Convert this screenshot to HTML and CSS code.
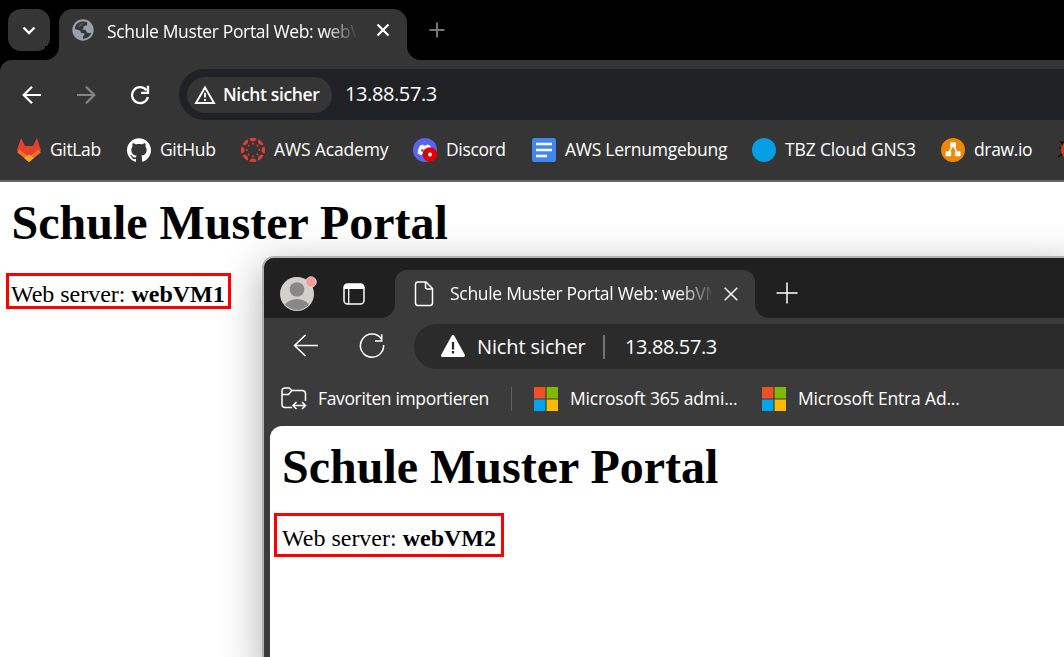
FILE: index.html
```html
<!DOCTYPE html>
<html lang="de">
<head>
<meta charset="utf-8">
<title>Schule Muster Portal</title>
<link rel="stylesheet" href="styles.css">
</head>
<body>
<main class="desktop">
  <section class="chrome">
    <header class="c-tabs">
      <div class="c-search"><svg width="42" height="42" viewBox="0 0 42 42"><path d="M15.500 18.500l5.500 5.500 5.500-5.500" fill="none" stroke="#fff" stroke-width="2.400"/></svg></div>
      <div class="c-tab">
        <svg class="globe" width="22" height="22" viewBox="0 0 22 22"><circle cx="11" cy="11" r="10.700" fill="#9aa0a6"/><path d="M3 10C3 6 6 3 10.500 2.600c2 0 3.500.4 4.700 1L15 6.300l-3.500 1v2.200L10 10.700h3.500l1.500 3 4.300.5c-1.500 3.300-4.500 5.500-8.300 5.500v-2.500l1.500-1.400v-1.600h-3L8 11.500z" fill="#353535"/><path d="M5.500 7.500L9 4.300l3-.3-2.500 2.800-2 1.500z" fill="#9aa0a6" opacity=".35"/></svg>
        <span class="c-title">Schule Muster Portal Web: webVM1</span>
        <svg class="c-close" width="14" height="14" viewBox="0 0 14 14"><path d="M1.500 1.500l11 11M12.500 1.500l-11 11" stroke="#fff" stroke-width="2.200"/></svg>
      </div>
      <svg class="c-plus" width="16" height="16" viewBox="0 0 16 16"><path d="M8 .5v15M.5 8h15" stroke="#777" stroke-width="2"/></svg>
    </header>
    <div class="c-tools">
      <svg width="20" height="20" viewBox="0 0 20 20"><path d="M19 10H2M10 1.700L1.700 10l8.300 8.300" fill="none" stroke="#fff" stroke-width="2.200"/></svg>
      <svg width="20" height="20" viewBox="0 0 20 20"><path d="M1 10h17M10 1.700l8.300 8.300-8.300 8.300" fill="none" stroke="#858585" stroke-width="2.200"/></svg>
      <svg width="20" height="20" viewBox="0 0 20 20"><path d="M16.500 5.300A8 8 0 1 0 17.900 12M18 .8v7h-7" fill="none" stroke="#fff" stroke-width="2.300"/></svg>
      <div class="c-address">
        <div class="c-chip">
          <svg width="22" height="20" viewBox="0 0 22 20"><path d="M11 2.500L20 18H2z" fill="none" stroke="#fff" stroke-width="1.900"/><path d="M11 7.800v4.700M11 14v2" stroke="#fff" stroke-width="1.900"/></svg>
          <span class="c-insecure">Nicht sicher</span>
        </div>
        <span class="c-url">13.88.57.3</span>
      </div>
    </div>
    <nav class="c-marks">
      <a><svg width="24" height="24" viewBox="0 0 24 24"><path d="M4 0l4 8h8l4-8 4 12.500L12 24 0 12.500z" fill="#e2432a"/><path d="M2.500 11.500L12 19l9.500-7.500 2.300 2.700L12 24 .2 14.200z" fill="#fc6d26"/><path d="M12 16.500l5 3.500-5 4-5-4z" fill="#fca326"/></svg><span>GitLab</span></a>
      <a><svg width="24" height="24" viewBox="0 0 24 24"><path d="M12 .297c-6.630 0-12 5.373-12 12 0 5.303 3.438 9.800 8.205 11.385.6.113.82-.258.82-.577 0-.285-.01-1.040-.015-2.040-3.338.724-4.042-1.610-4.042-1.610C4.422 18.070 3.633 17.700 3.633 17.700c-1.087-.744.084-.729.084-.729 1.205.084 1.838 1.236 1.838 1.236 1.070 1.835 2.809 1.305 3.495.998.108-.776.417-1.305.76-1.605-2.665-.3-5.466-1.332-5.466-5.930 0-1.310.465-2.380 1.235-3.220-.135-.303-.54-1.523.105-3.176 0 0 1.005-.322 3.300 1.230.96-.267 1.980-.399 3-.405 1.020.006 2.040.138 3 .405 2.280-1.552 3.285-1.230 3.285-1.230.645 1.653.24 2.873.12 3.176.765.84 1.230 1.910 1.230 3.220 0 4.610-2.805 5.625-5.475 5.920.42.36.81 1.096.81 2.220v3.286c0 .315.21.69.825.57C20.565 22.092 24 17.592 24 12.297c0-6.627-5.373-12-12-12" fill="#fff"/></svg><span>GitHub</span></a>
      <a><svg width="24" height="24" viewBox="-12 -12 24 24"><defs><g id="seg"><path d="M-3.600-11.500A12 12 0 0 1 3.600-11.500A3.700 3.900 0 0 1-3.600-11.500Z"/><circle cy="-6.200" r="1"/></g></defs><g fill="#e73c30"><use href="#seg"/><use href="#seg" transform="rotate(45)"/><use href="#seg" transform="rotate(90)"/><use href="#seg" transform="rotate(135)"/><use href="#seg" transform="rotate(180)"/><use href="#seg" transform="rotate(225)"/><use href="#seg" transform="rotate(270)"/><use href="#seg" transform="rotate(315)"/></g></svg><span class="academy">AWS Academy</span></a>
      <a><svg width="24" height="24" viewBox="0 0 24 24"><circle cx="12" cy="12" r="12" fill="#5865f2"/><path d="M7 7.500l3-1 .7 1h2.600l.7-1 3 1c1.700 2.500 2.400 5 2.300 8l-3.600 1.700-1-1.500H9.300l-1 1.500-3.600-1.700c0-3 .7-5.500 2.300-8z" fill="#fff"/><circle cx="9.400" cy="12.500" r="1.400" fill="#5865f2"/><circle cx="17" cy="16.500" r="7.300" fill="#e00000"/><circle cx="17" cy="16.500" r="2" fill="#fff"/></svg><span>Discord</span></a>
      <a><svg width="24" height="24" viewBox="0 0 24 24"><rect width="24" height="24" rx="2.500" fill="#4285f4"/><path d="M4 6h16M4 12h16M4 18h11" stroke="#fff" stroke-width="2.700"/></svg><span class="lern">AWS Lernumgebung</span></a>
      <a><svg width="24" height="24" viewBox="0 0 24 24"><circle cx="12" cy="12" r="12" fill="#049fe3"/></svg><span class="tbz">TBZ Cloud GNS3</span></a>
      <a><svg width="24" height="24" viewBox="0 0 24 24"><circle cx="12" cy="12" r="12" fill="#f08705"/><path d="M11.500 7L7.500 16M12.500 7l4 9" stroke="#fff" stroke-width="1.600"/><g fill="#fff"><rect x="9.200" y="4.200" width="5.800" height="5" rx=".8"/><rect x="4.500" y="13.300" width="5.700" height="5" rx=".8"/><rect x="13.900" y="13.300" width="5.700" height="5" rx=".8"/></g></svg><span>draw.io</span></a>
      <a><svg width="24" height="24" viewBox="0 0 24 24"><path d="M2 3l4 4M1 10h5M0 19l6-4M5 3v4" stroke="#111" stroke-width="1.600"/><ellipse cx="11" cy="12" rx="8" ry="9" fill="#d9341c"/></svg></a>
    </nav>
    <article class="page">
      <h1>Schule Muster Portal</h1>
      <p class="marked first">Web server: <b>webVM1</b></p>
    </article>
  </section>

  <section class="edge">
    <header class="e-tabs">
      <svg class="e-avatar" width="38" height="38" viewBox="0 0 38 38"><defs><clipPath id="face"><circle cx="17" cy="20" r="16"/></clipPath></defs><circle cx="17" cy="20" r="17" fill="#d2d0ce"/><g clip-path="url(#face)" fill="#8a8886"><circle cx="17" cy="15.500" r="7.300"/><ellipse cx="17" cy="34" rx="13" ry="9"/></g><circle cx="31" cy="8" r="5.300" fill="#f99a98" stroke="#e0e0e0" stroke-width=".8"/></svg>
      <svg class="e-panel" width="22" height="22" viewBox="0 0 22 22"><rect x="1" y="1" width="20" height="20" rx="3.500" fill="none" stroke="#fff" stroke-width="1.500"/><path d="M1 6V4.500Q1 1 4.500 1h13Q21 1 21 4.500V6z" fill="#fff"/><path d="M5.700 6v15" stroke="#fff" stroke-width="1.300"/></svg>
      <div class="e-tab">
        <svg class="e-file" width="20" height="26" viewBox="0 0 20 26"><path d="M4 1h8l6.500 6.500V22q0 2.500-2.500 2.500H4Q1.500 24.500 1.500 22V3.500Q1.500 1 4 1zM11.500 1v5q0 2 2 2h5" fill="none" stroke="#fff" stroke-width="1.500"/></svg>
        <span class="e-title">Schule Muster Portal Web: webVM2</span>
        <svg class="e-close" width="14" height="14" viewBox="0 0 14 14"><path d="M.7.7l12.600 12.600M13.300.7L.7 13.300" stroke="#fff" stroke-width="1.500"/></svg>
      </div>
      <svg class="e-plus" width="22" height="22" viewBox="0 0 22 22"><path d="M11 .5v21M.5 11h21" stroke="#fff" stroke-width="1.500"/></svg>
    </header>
    <div class="e-tools">
      <svg class="e-back" width="26" height="24" viewBox="0 0 26 24"><path d="M25 11.500H1.500M12.500 1L1.500 11.500 12.500 22" fill="none" stroke="#fff" stroke-width="1.500"/></svg>
      <svg class="e-reload" width="26" height="26" viewBox="0 0 26 26"><path d="M22.500 6A11.600 11.600 0 1 0 24.600 12M22.700 1.200V8H16" fill="none" stroke="#fff" stroke-width="1.500"/></svg>
      <div class="e-address">
        <svg width="26" height="24" viewBox="0 0 26 24"><path d="M13 2.500L23.500 21.500H2.500z" fill="#fff" stroke="#fff" stroke-width="3" stroke-linejoin="round"/><path d="M13 8v7.500M13 17v2.500" stroke="#2b2b2b" stroke-width="2.300"/></svg>
        <span class="e-insecure">Nicht sicher</span>
        <span class="e-divider"></span>
        <span class="e-url">13.88.57.3</span>
      </div>
    </div>
    <nav class="e-marks">
      <a class="import"><svg width="26" height="24" viewBox="0 0 26 24"><path d="M11 20.500H4q-3 0-3-3V4q0-3 3-3h4l3 2.500h10q3.500 0 3.500 3.500v7M1 7.500h6.500l3.500-4M12.500 18.500H24M15.500 15l-3.500 3.500 3.500 3.500M21 15l3.500 3.500L21 22" fill="none" stroke="#fff" stroke-width="1.500"/></svg><span>Favoriten importieren</span></a>
      <a class="ms"><svg width="24" height="24" viewBox="0 0 24 24"><path d="M0 0h11.400v11.400H0z" fill="#f25022"/><path d="M12.600 0H24v11.400H12.600z" fill="#7fba00"/><path d="M0 12.600h11.400V24H0z" fill="#00a4ef"/><path d="M12.600 12.600H24V24H12.600z" fill="#ffb900"/></svg><span>Microsoft 365 admi...</span></a>
      <a class="ms"><svg width="24" height="24" viewBox="0 0 24 24"><path d="M0 0h11.400v11.400H0z" fill="#f25022"/><path d="M12.600 0H24v11.400H12.600z" fill="#7fba00"/><path d="M0 12.600h11.400V24H0z" fill="#00a4ef"/><path d="M12.600 12.600H24V24H12.600z" fill="#ffb900"/></svg><span>Microsoft Entra Ad...</span></a>
    </nav>
    <article class="page e-page">
      <h1>Schule Muster Portal</h1>
      <p class="marked second">Web server: <b>webVM2</b></p>
    </article>
  </section>
</main>
</body>
</html>
```
FILE: styles.css
```css
* { box-sizing: border-box; }
body { margin: 0; background: #fff; }
svg { display: block; flex: none; }
.desktop { position: relative; width: 1064px; height: 657px; overflow: hidden; font: 17.500px/26px "Open Sans", "Noto Sans", sans-serif; color: #fff; white-space: nowrap; }

/* first browser */
.chrome { height: 100%; background: #fff; }
.c-tabs { display: flex; height: 60px; padding: 9px 0 0 8px; background: #000; }
.c-search { width: 42px; height: 42px; border-radius: 13px; background: #353535; }
.c-tab { position: relative; display: flex; width: 348px; height: 51px; margin-left: 9px; padding: 10px 0 0 13px; border-radius: 14px 14px 0 0; background: #353535; }
.c-tab::before, .c-tab::after, .e-tab::before, .e-tab::after { content: ""; position: absolute; bottom: 0; width: 14px; height: 14px; }
.c-tab::before { left: -14px; background: radial-gradient(circle at 0 0, #000 13.500px, #353535 14.500px); }
.c-tab::after { right: -14px; background: radial-gradient(circle at 100% 0, #000 13.500px, #353535 14.500px); }
.c-title { width: 249px; margin: -1px 0 0 13px; overflow: hidden; letter-spacing: -.36px; -webkit-mask-image: linear-gradient(90deg, #000 218px, transparent 251px); }
.c-close { margin: 4px 0 0 20px; }
.c-plus { margin: 13px 0 0 22px; }
.c-tools { display: flex; align-items: center; height: 61px; padding: 8px 0 0 22px; gap: 34px; background: radial-gradient(circle at 12px 12px, #353535 11.500px, #000 12.500px) 0 0 / 12px 12px no-repeat, #353535; }
.c-address { display: flex; align-items: center; flex: 1; height: 51px; margin-left: -5px; padding-left: 8px; border-radius: 26px 0 0 26px; background: #202124; }
.c-chip { display: flex; align-items: center; width: 145px; height: 36px; padding-left: 7px; gap: 7px; border-radius: 18px; background: #353535; }
.c-insecure { padding-bottom: 1px; font-weight: 600; letter-spacing: -.35px; }
.c-url { margin-left: 13px; padding-bottom: 1px; font-size: 20px; letter-spacing: -.4px; }
.c-marks { display: grid; grid-template-columns: 110px 114px 172px 119px 220px 189px 117px 24px; align-items: center; height: 61px; padding: 0 0 2px 17px; border-bottom: 2px solid #666; background: #353535; }
.c-marks a { display: flex; align-items: center; gap: 9px; letter-spacing: -.36px; }
.c-marks span { padding-bottom: 2px; }
.c-marks .academy, .c-marks .tbz { letter-spacing: -.15px; }
.c-marks .lern { letter-spacing: -.25px; }

/* web page content */
.page { padding: 20px 12px; color: #000; font: 24px/28px "Liberation Serif", serif; }
.page h1 { margin: 0 0 0 -.5px; font-size: 48px; line-height: 42px; }
.marked { width: fit-content; margin: 0; border: 3px solid #f00; }
.first { width: 225px; height: 36px; margin: 29px 0 0 -6px; padding: 4px 0 0 2px; letter-spacing: -.02px; }

/* overlapping browser window */
.edge { position: absolute; left: 262px; top: 256px; width: 820px; height: 420px; border: 2px solid #b0b0b0; border-radius: 12px 0 0 0; overflow: hidden; background: #3b3b3b; box-shadow: 0 10px 42px rgba(0,0,0,.32); }
.e-tabs { display: flex; height: 60px; padding: 12px 0 0 16px; background: #202020; }
.e-avatar { margin-top: 4px; }
.e-panel { margin: 13px 0 0 25px; }
.e-tab { position: relative; display: flex; width: 360px; height: 48px; margin-left: 30px; padding: 11px 0 0 19px; border-radius: 12px 12px 0 0; background: #3b3b3b; }
.e-tab::before { left: -14px; background: radial-gradient(circle at 0 0, #202020 13.500px, #3b3b3b 14.500px); }
.e-tab::after { right: -14px; background: radial-gradient(circle at 100% 0, #202020 13.500px, #3b3b3b 14.500px); }
.e-title { width: 261px; margin: -1px 0 0 16px; overflow: hidden; letter-spacing: -.3px; -webkit-mask-image: linear-gradient(90deg, #000 230px, transparent 265px); }
.e-close { margin: 6px 0 0 13px; }
.e-plus { margin: 12px 0 0 21px; }
.e-tools { display: flex; height: 51px; padding: 6px 0 0 29px; }
.e-back { margin-top: 10px; }
.e-reload { margin: 9px 0 0 40px; }
.e-address { display: flex; align-items: center; flex: 1; height: 45px; margin-left: 29px; padding-left: 26px; border-radius: 23px 0 0 23px; background: #2b2b2b; font-size: 20px; }
.e-address svg { margin-top: -2px; }
.e-insecure { width: 137px; padding-left: 11px; letter-spacing: -.12px; }
.e-divider { width: 2px; height: 24px; margin-right: 20px; background: #737373; }
.e-url { font-size: 20px; letter-spacing: -.4px; }
.e-marks { display: flex; align-items: center; height: 57px; padding: 3px 0 0 17px; letter-spacing: -.18px; }
.e-marks a { display: flex; align-items: center; }
.e-marks span { padding-bottom: 2px; }
.import { width: 231px; height: 24px; gap: 11px; border-right: 1px solid #606060; letter-spacing: -.35px; }
.ms { width: 228px; gap: 12px; }
.import + .ms { margin-left: 22px; }
.e-page { height: 260px; margin-left: 6px; border-radius: 12px 0 0 0; background: #fff; }
.e-page h1 { margin-left: 0; }
.second { width: 230px; height: 44px; margin: 25px 0 0 -8px; padding: 8px 0 0 5px; }
```
